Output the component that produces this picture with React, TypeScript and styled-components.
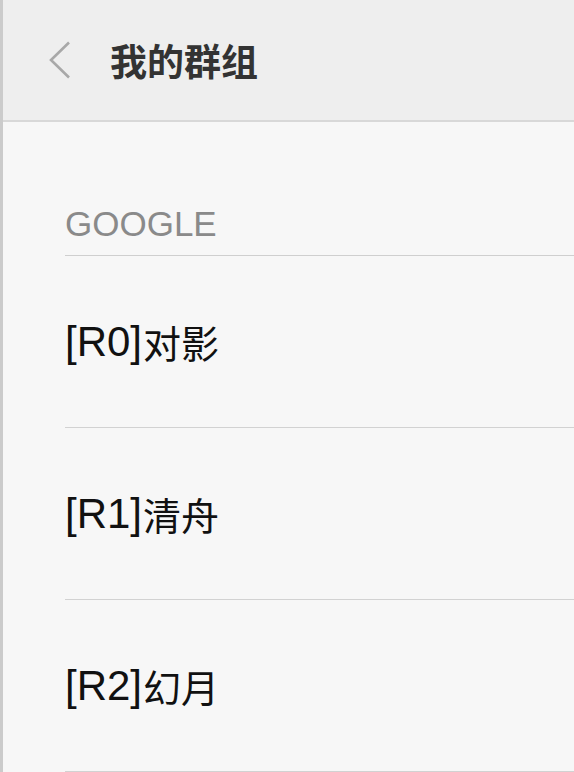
import React from 'react';
import styled, { createGlobalStyle } from 'styled-components';

const GlobalStyle = createGlobalStyle`
  html, body {
    margin: 0;
    padding: 0;
    background: #f7f7f7;
  }
  * {
    box-sizing: border-box;
  }
`;

const Screen = styled.div`
  width: 574px;
  height: 772px;
  overflow: hidden;
  background: #f7f7f7;
  border-left: 3px solid #cbcbcb;
  font-family: "Liberation Sans", "Noto Sans CJK SC", sans-serif;
`;

const Header = styled.header`
  height: 122px;
  display: flex;
  align-items: center;
  background: #eeeeee;
  border-bottom: 2px solid #d8d8d8;
  padding-left: 44px;
`;

const BackButton = styled.button`
  width: 26px;
  height: 40px;
  padding: 0;
  border: none;
  background: transparent;
  display: flex;
  align-items: center;
  justify-content: flex-start;
  cursor: pointer;
`;

const Title = styled.h1`
  margin: 0 0 0 37px;
  font-family: "Noto Sans CJK SC", sans-serif;
  font-size: 37px;
  font-weight: 700;
  color: #333333;
`;

const List = styled.div`
  padding-left: 62px;
`;

const SectionHeader = styled.div`
  height: 134px;
  display: flex;
  align-items: flex-end;
  padding-bottom: 14px;
  border-bottom: 1px solid #cfcfcf;
  font-size: 35px;
  line-height: 35px;
  color: #8a8a8a;
`;

const Row = styled.div`
  height: 172px;
  display: flex;
  align-items: center;
  border-bottom: 1px solid #d2d2d2;
  color: #111111;
`;

const Code = styled.span`
  font-family: "Liberation Sans", sans-serif;
  font-size: 42px;
`;

const Name = styled.span`
  font-family: "Noto Sans CJK SC", sans-serif;
  font-size: 38px;
  margin-left: 1px;
`;

const groups = [
  { code: '[R0]', name: '对影' },
  { code: '[R1]', name: '清舟' },
  { code: '[R2]', name: '幻月' },
];

function App() {
  return (
    <>
      <GlobalStyle />
      <Screen>
        <Header>
          <BackButton aria-label="返回">
            <svg width="26" height="38" viewBox="0 0 26 38">
              <path d="M22 1.5 L4 19 L22 36.5" fill="none" stroke="#a8a8a8" strokeWidth="2.6" />
            </svg>
          </BackButton>
          <Title>我的群组</Title>
        </Header>
        <List>
          <SectionHeader>GOOGLE</SectionHeader>
          {groups.map(g => (
            <Row key={g.code}>
              <Code>{g.code}</Code>
              <Name>{g.name}</Name>
            </Row>
          ))}
        </List>
      </Screen>
    </>
  );
}

export default App;
